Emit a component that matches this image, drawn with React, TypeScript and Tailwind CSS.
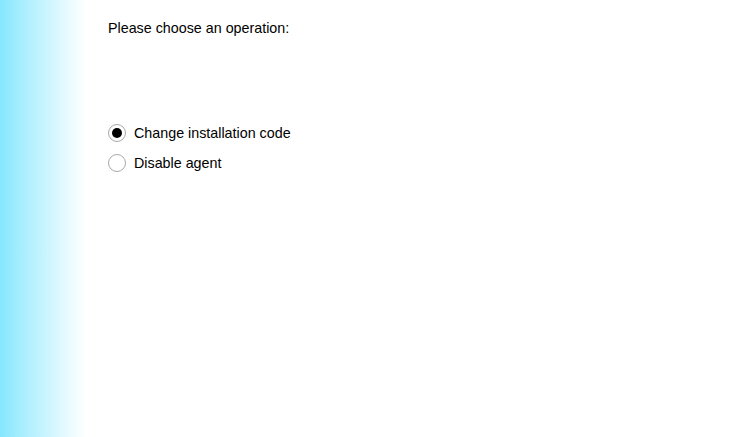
import React, { useState } from 'react';

const options = [
    { id: 'change', label: 'Change installation code' },
    { id: 'disable', label: 'Disable agent' },
];

export default function App() {
    const [selected, setSelected] = useState('change');

    return (
        <div className="flex h-[437px] w-[750px] bg-white text-[14.3px] text-black" style={{ fontFamily: '"Liberation Sans", Arial, sans-serif' }}>
            {/* Left: gradient strip */}
            <div className="w-[86px] shrink-0 bg-gradient-to-r from-[#84e7fd] to-white" />

            {/* Right: content */}
            <div className="flex flex-col pl-[22px] pt-[19px]">
                <p className="leading-[18px]">Please choose an operation:</p>

                <div className="mt-[87px] flex flex-col gap-[12px]">
                    {options.map((opt) => (
                        <label key={opt.id} className="flex cursor-default items-center gap-[8px]" onClick={() => setSelected(opt.id)}>
                            <span className="flex h-[18px] w-[18px] items-center justify-center rounded-full border border-[#a9a9a9] bg-white">
                                {selected === opt.id && <span className="h-[10px] w-[10px] rounded-full bg-black" />}
                            </span>
                            <span className="leading-[18px]">{opt.label}</span>
                        </label>
                    ))}
                </div>
            </div>
        </div>
    );
}
